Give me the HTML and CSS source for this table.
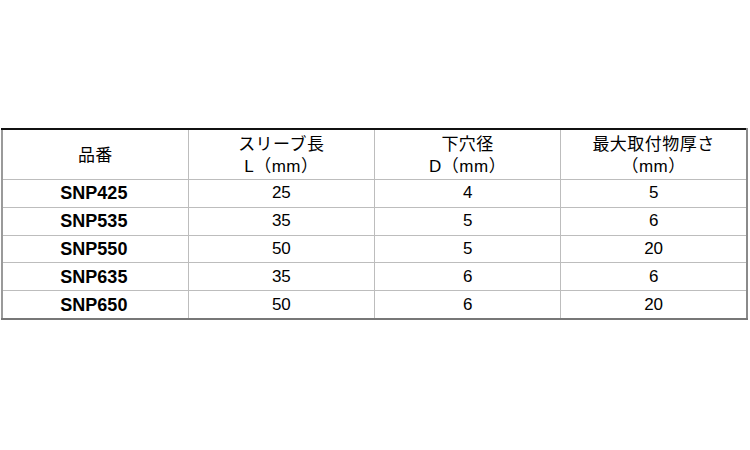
FILE: index.html
```html
<!DOCTYPE html>
<html lang="ja">
<head>
<meta charset="utf-8">
<link rel="stylesheet" href="styles.css">
</head>
<body>
<table class="spec">
  <colgroup>
    <col class="c"><col class="c"><col class="c"><col class="c">
  </colgroup>
  <thead>
    <tr class="head">
      <th>品番</th>
      <th>スリーブ長<br>L（mm）</th>
      <th>下穴径<br>D（mm）</th>
      <th>最大取付物厚さ<br>（mm）</th>
    </tr>
  </thead>
  <tbody>
    <tr><td class="code">SNP425</td><td>25</td><td>4</td><td>5</td></tr>
    <tr><td class="code">SNP535</td><td>35</td><td>5</td><td>6</td></tr>
    <tr><td class="code">SNP550</td><td>50</td><td>5</td><td>20</td></tr>
    <tr><td class="code">SNP635</td><td>35</td><td>6</td><td>6</td></tr>
    <tr><td class="code">SNP650</td><td>50</td><td>6</td><td>20</td></tr>
  </tbody>
</table>
</body>
</html>
```
FILE: styles.css
```css
html, body {
  margin: 0;
  padding: 0;
  background: #ffffff;
}
body {
  font-family: "Liberation Sans", "Noto Sans CJK JP", sans-serif;
  color: #000000;
}
.spec {
  margin: 128px 0 0 1px;
  width: 747px;
  border-collapse: collapse;
  table-layout: fixed;
  border-top: 2px solid #111111;
  border-left: 2px solid #9a9a9a;
  border-right: 2px solid #8a8a8a;
  border-bottom: 2px solid #777777;
}
.c { width: 25%; }
.spec th, .spec td {
  border: 1px solid #bdbdbd;
  text-align: center;
  padding: 0;
  font-size: 17px;
  font-weight: normal;
}
.spec tr.head th {
  height: 47px;
  line-height: 22px;
  padding-top: 2px;
  letter-spacing: 0.5px;
}
.spec tbody td {
  height: 26.8px;
  line-height: 20px;
}
.spec td.code {
  font-weight: bold;
  font-size: 18px;
  padding-right: 3px;
}
```
